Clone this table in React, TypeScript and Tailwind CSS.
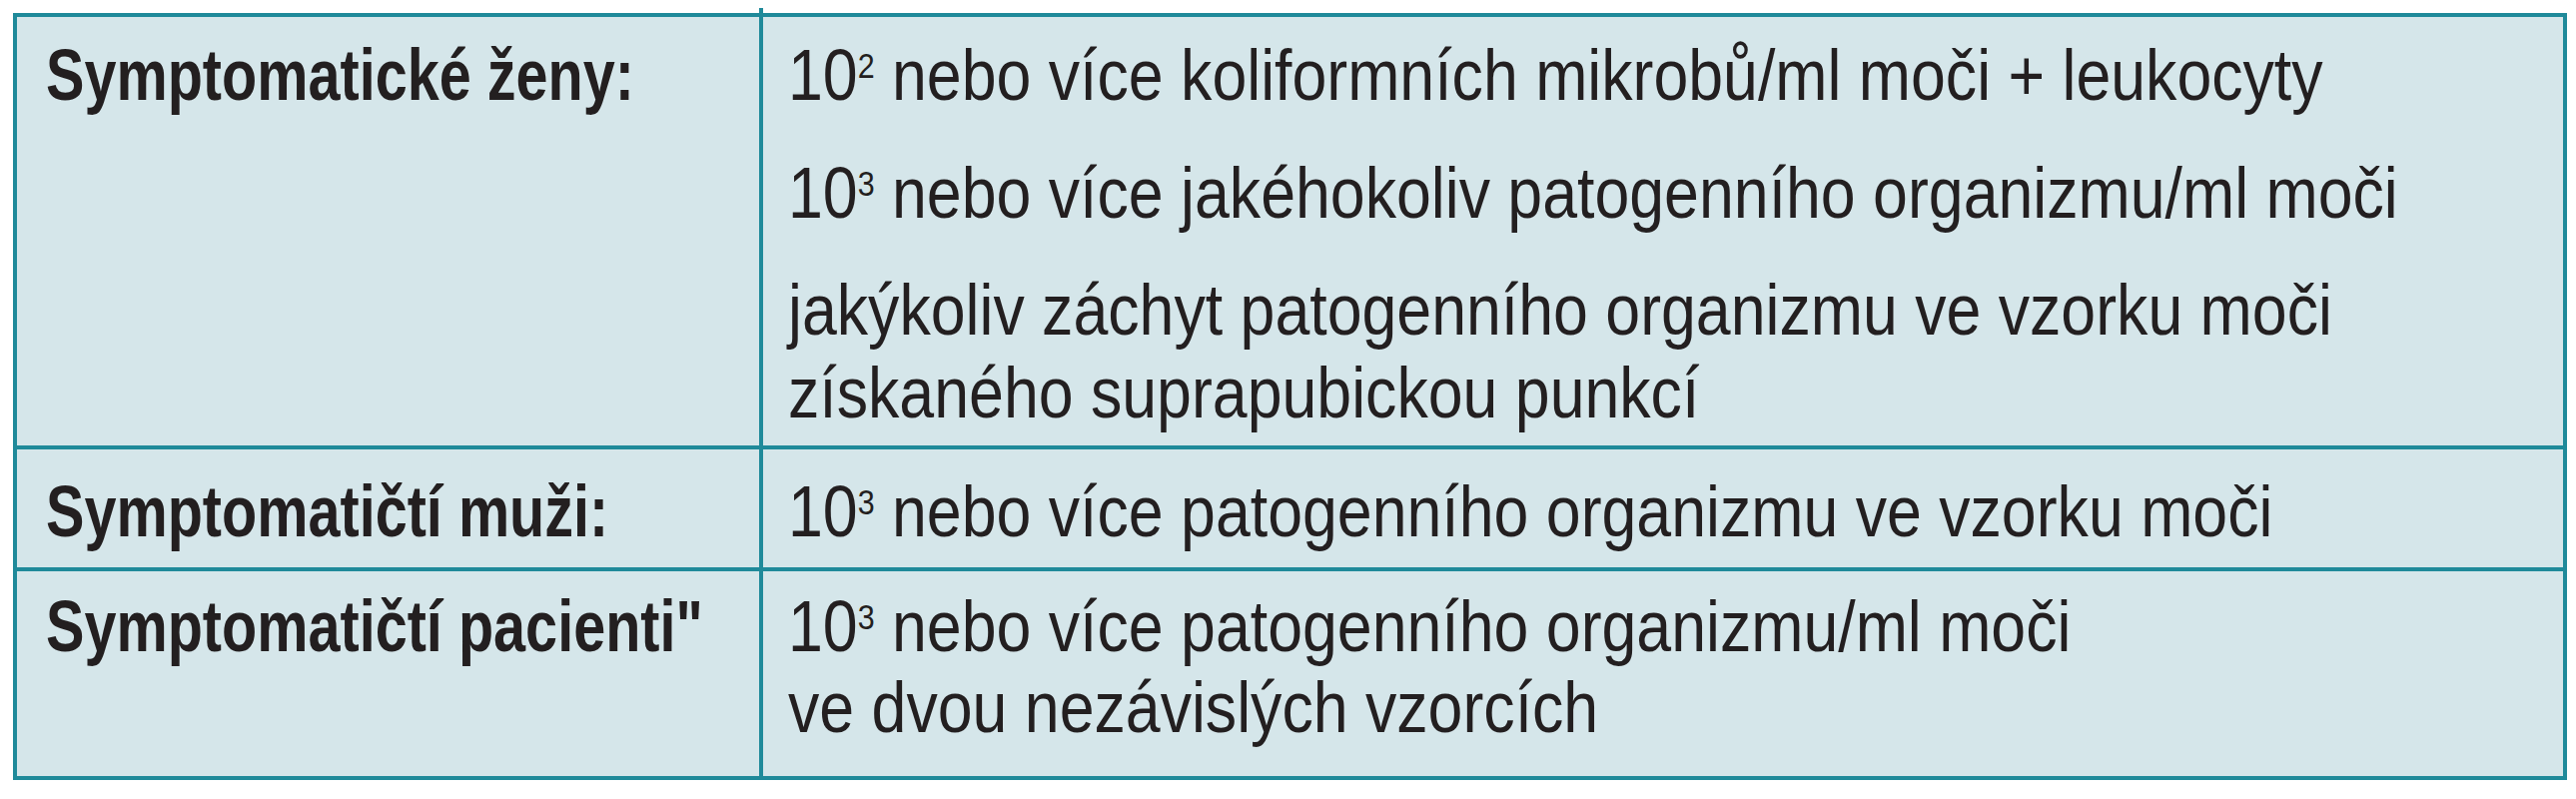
export default function App() {
  const sup = "text-[35px] leading-none align-[22px]";
  const narrow = "whitespace-nowrap origin-left scale-x-[0.87]";
  const narrowBold = "whitespace-nowrap origin-left scale-x-[0.8] font-bold";

  return (
    <main className="w-[2579px] h-[800px] bg-white pt-[8px] pl-[13px] text-[#231f20] font-['Liberation_Sans',Arial,sans-serif] text-[72px]">
      {/* divider overshoot at the top */}
      <div className="h-[5px] w-[4px] ml-[747px] bg-[#1f8a9a]" />

      <div className="w-[2557px] border-4 border-[#1f8a9a] bg-[#d5e6ea]">
        {/* Row 1 */}
        <div className="flex h-[433px] border-b-4 border-[#1f8a9a]">
          <div className="w-[747px] shrink-0 border-r-4 border-[#1f8a9a] pl-[29px] pt-[22px] leading-[72px]">
            <div className={narrowBold}>Symptomatické ženy:</div>
          </div>
          <div className="flex-1 min-w-0 pl-[25px] pt-[22px] leading-[72px]">
            <div className={narrow}>
              10<span className={sup}>2</span> nebo více koliformních mikrobů/ml moči + leukocyty
            </div>
            <div className={`${narrow} mt-[46px]`}>
              10<span className={sup}>3</span> nebo více jakéhokoliv patogenního organizmu/ml moči
            </div>
            <div className="mt-[40px] leading-[83px]">
              <div className={narrow}>jakýkoliv záchyt patogenního organizmu ve vzorku moči</div>
              <div className={narrow}>získaného suprapubickou punkcí</div>
            </div>
          </div>
        </div>

        {/* Row 2 */}
        <div className="flex h-[122px] border-b-4 border-[#1f8a9a]">
          <div className="w-[747px] shrink-0 border-r-4 border-[#1f8a9a] pl-[29px] pt-[26px] leading-[72px]">
            <div className={narrowBold}>Symptomatičtí muži:</div>
          </div>
          <div className="flex-1 min-w-0 pl-[25px] pt-[26px] leading-[72px]">
            <div className={narrow}>
              10<span className={sup}>3</span> nebo více patogenního organizmu ve vzorku moči
            </div>
          </div>
        </div>

        {/* Row 3 */}
        <div className="flex h-[205px]">
          <div className="w-[747px] shrink-0 border-r-4 border-[#1f8a9a] pl-[29px] pt-[15px] leading-[81px]">
            <div className={narrowBold}>Symptomatičtí pacienti"</div>
          </div>
          <div className="flex-1 min-w-0 pl-[25px] pt-[15px] leading-[81px]">
            <div className={narrow}>
              10<span className={sup}>3</span> nebo více patogenního organizmu/ml moči
            </div>
            <div className={narrow}>ve dvou nezávislých vzorcích</div>
          </div>
        </div>
      </div>
    </main>
  );
}
